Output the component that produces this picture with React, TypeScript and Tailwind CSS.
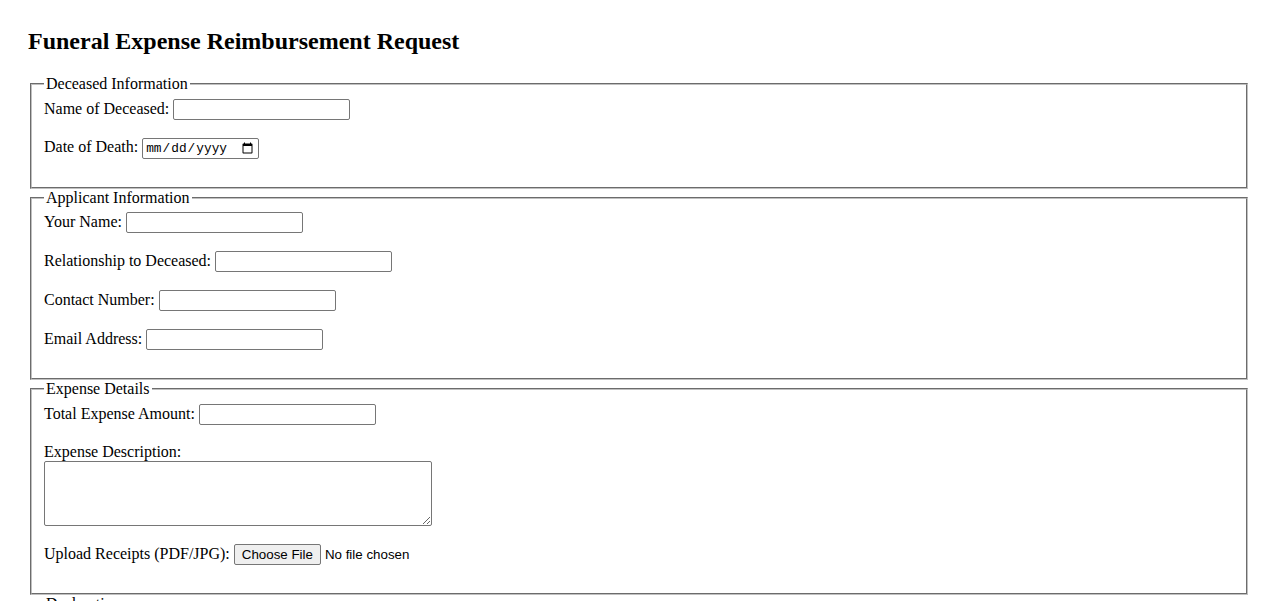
export default function App() {
  const text =
    "w-[177px] h-[21px] align-baseline border border-[#767676] rounded-[2px] px-[2px] py-[1px] bg-white font-['Liberation_Sans',Arial,sans-serif] text-[13.33px] leading-[normal]";
  const fieldset =
    "mx-[2px] border-2 [border-style:groove] border-[#c0c0c0] pt-[5.6px] px-[12px] pb-[10px] min-w-min";
  const legend = "px-[2px]";

  return (
    <div className="p-[28px] bg-white text-black font-['Liberation_Serif','Times_New_Roman',serif] text-[16px] leading-[normal] min-h-screen">
      <h2 className="text-[24px] font-bold mb-[19.92px]">
        Funeral Expense Reimbursement Request
      </h2>
      <form>
        <fieldset className={fieldset}>
          <legend className={legend}>Deceased Information</legend>
          <label htmlFor="deceasedName">Name of Deceased:</label>{" "}
          <input type="text" id="deceasedName" className={text} />
          <br />
          <br />
          <label htmlFor="dateOfDeath">Date of Death:</label>{" "}
          <input
            type="date"
            id="dateOfDeath"
            className="w-[117px] h-[21px] align-baseline border border-[#767676] rounded-[2px] pl-[2px] pr-[2px] py-[1px] bg-white font-['Liberation_Mono',monospace] text-[12.8px] leading-[normal]"
          />
          <br />
          <br />
        </fieldset>

        <fieldset className={fieldset}>
          <legend className={legend}>Applicant Information</legend>
          <label htmlFor="applicantName">Your Name:</label>{" "}
          <input type="text" id="applicantName" className={text} />
          <br />
          <br />
          <label htmlFor="relationship">Relationship to Deceased:</label>{" "}
          <input type="text" id="relationship" className={text} />
          <br />
          <br />
          <label htmlFor="contactNumber">Contact Number:</label>{" "}
          <input type="tel" id="contactNumber" className={text} />
          <br />
          <br />
          <label htmlFor="email">Email Address:</label>{" "}
          <input type="email" id="email" className={text} />
          <br />
          <br />
        </fieldset>

        <fieldset className={fieldset}>
          <legend className={legend}>Expense Details</legend>
          <label htmlFor="totalExpense">Total Expense Amount:</label>{" "}
          <input type="number" id="totalExpense" className={text} />
          <br />
          <br />
          <label htmlFor="expenseDescription">Expense Description:</label>
          <br />
          <textarea
            id="expenseDescription"
            rows={4}
            cols={50}
            className="w-[388px] h-[65px] align-top border border-[#767676] rounded-[2px] p-[2px] bg-white font-['Liberation_Mono',monospace] text-[13.33px] leading-[normal] resize"
          />
          <br />
          <br />
          <label htmlFor="receipts">Upload Receipts (PDF/JPG):</label>{" "}
          <input
            type="file"
            id="receipts"
            accept=".pdf,.jpg,.jpeg"
            className="align-baseline font-['Liberation_Sans',Arial,sans-serif] text-[13.33px] leading-[normal] file:mr-[4px] file:h-[21px] file:px-[7px] file:py-[1px] file:border file:border-[#767676] file:rounded-[2px] file:bg-[#efefef] file:text-black"
          />
          <br />
          <br />
        </fieldset>

        <fieldset className={fieldset}>
          <legend className={legend}>Declaration</legend>
          <input type="checkbox" id="declare" className="align-baseline" />{" "}
          <label htmlFor="declare">
            I declare that the information provided is true and correct.
          </label>
          <br />
          <br />
        </fieldset>
        <br />
        <button
          type="submit"
          className="px-[6px] py-[1px] border border-[#767676] rounded-[2px] bg-[#efefef] font-['Liberation_Sans',Arial,sans-serif] text-[13.33px]"
        >
          Submit Request
        </button>
      </form>
    </div>
  );
}
